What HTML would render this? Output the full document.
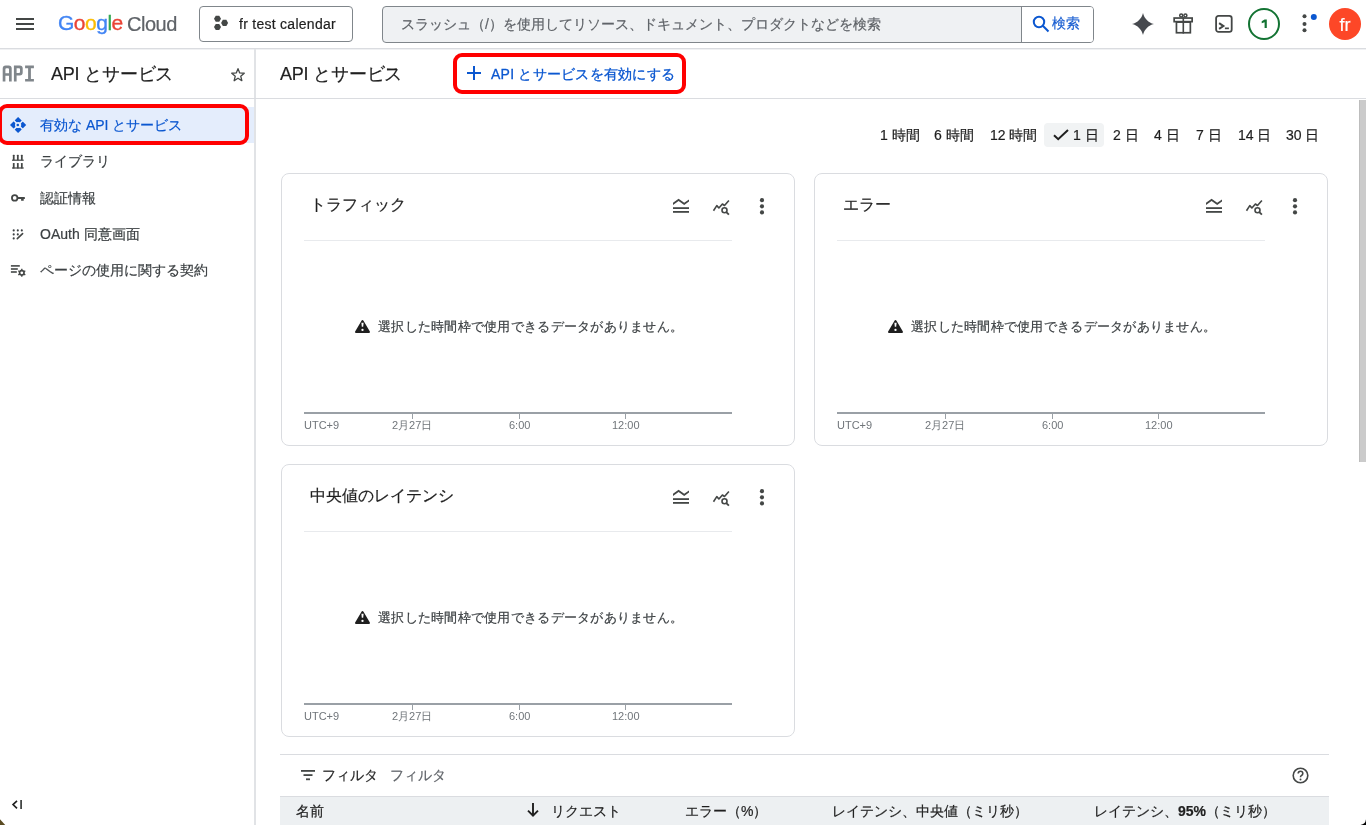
<!DOCTYPE html>
<html lang="ja">
<head>
<meta charset="utf-8">
<style>
*{box-sizing:border-box;margin:0;padding:0}
html,body{width:1366px;height:825px;overflow:hidden;background:#fff}
body{position:relative;font-family:"Liberation Sans",sans-serif;color:#3c4043}
.a{position:absolute;white-space:nowrap;-webkit-text-stroke:0.2px currentColor}
.hline{position:absolute;height:1px;background:#dadce0}
.vline{position:absolute;width:1px;background:#dadce0}
svg{position:absolute;overflow:visible}
</style>
</head>
<body>
<div id="root" style="position:absolute;left:0;top:0;width:1366px;height:825px;will-change:transform">
<!-- ===== HEADER ===== -->
<div class="hline" style="left:0;top:48px;width:1366px"></div><div class="hline" style="left:0;top:49px;width:1366px;background:#f0f1f3"></div>
<!-- hamburger -->
<div class="a" style="left:16px;top:18px;width:18px;height:2px;background:#444746"></div>
<div class="a" style="left:16px;top:23px;width:18px;height:2px;background:#444746"></div>
<div class="a" style="left:16px;top:28px;width:18px;height:2px;background:#444746"></div>
<!-- logo -->
<div class="a" id="logo" style="left:58px;top:11px;font-size:21px;line-height:24px;letter-spacing:-0.5px;-webkit-text-stroke:0.35px currentColor"><span style="color:#4285f4">G</span><span style="color:#ea4335">o</span><span style="color:#fbbc04">o</span><span style="color:#4285f4">g</span><span style="color:#34a853">l</span><span style="color:#ea4335">e</span></div>
<div class="a" id="logo2" style="left:127px;top:12px;font-size:20px;line-height:24px;letter-spacing:-0.5px;color:#5f6368;-webkit-text-stroke:0.2px #5f6368">Cloud</div>
<!-- project picker -->
<div class="a" style="left:199px;top:6px;width:154px;height:36px;border:1px solid #80868b;border-radius:4px"></div>
<svg style="left:200px;top:10px" width="30" height="26" viewBox="0 0 30 26"><polygon points="21.00,8.80 19.25,11.83 15.75,11.83 14.00,8.80 15.75,5.77 19.25,5.77" fill="#444746"/><polygon points="28.10,12.90 26.35,15.93 22.85,15.93 21.10,12.90 22.85,9.87 26.35,9.87" fill="#444746"/><polygon points="21.00,17.00 19.25,20.03 15.75,20.03 14.00,17.00 15.75,13.97 19.25,13.97" fill="#444746"/></svg>
<div class="a" id="proj" style="left:239px;top:15px;font-size:14px;line-height:18px;letter-spacing:0.27px;color:#1f1f1f">fr test calendar</div>
<!-- search -->
<div class="a" style="left:382px;top:6px;width:712px;height:37px;border:1px solid #80868b;border-radius:4px;background:#eff1f3;overflow:hidden">
  <div style="position:absolute;left:638px;top:0;width:74px;height:37px;background:#fff;border-left:1px solid #80868b"></div>
</div>
<div class="a" id="ph" style="left:401px;top:15px;font-size:14px;line-height:18px;color:#5f6368">スラッシュ（/）を使用してリソース、ドキュメント、プロダクトなどを検索</div>
<svg style="left:1032px;top:15px" width="18" height="18" viewBox="0 0 18 18"><circle cx="7" cy="7" r="5.2" fill="none" stroke="#0b57d0" stroke-width="2"/><line x1="10.8" y1="10.8" x2="16.5" y2="16.5" stroke="#0b57d0" stroke-width="2"/></svg>
<div class="a" id="srch" style="left:1052px;top:15px;font-size:13.5px;line-height:18px;color:#1a5fd2">検索</div>
<!-- right icons -->
<svg style="left:1132px;top:13px" width="22" height="22" viewBox="0 0 22 22"><path d="M11 0 C12.3 5.6 16.4 9.7 22 11 C16.4 12.3 12.3 16.4 11 22 C9.7 16.4 5.6 12.3 0 11 C5.6 9.7 9.7 5.6 11 0Z" fill="#46494e"/></svg>
<svg style="left:1168px;top:8px" width="30" height="30" viewBox="0 0 30 30"><g fill="none" stroke="#444746" stroke-width="1.7"><rect x="6.15" y="10.05" width="18" height="3.6"/><rect x="8.45" y="14.1" width="13.9" height="10.65"/><circle cx="13.2" cy="7.6" r="1.5" stroke-width="1.5"/><circle cx="17.4" cy="7.6" r="1.5" stroke-width="1.5"/></g><rect x="14.5" y="9.2" width="1.6" height="16.4" fill="#444746"/></svg>
<svg style="left:1215px;top:15px" width="18" height="18" viewBox="0 0 18 18"><rect x="1.1" y="0.95" width="15.6" height="15.95" rx="2.4" fill="none" stroke="#444746" stroke-width="1.8"/><path d="M4.1 8.2L8.4 11.05 4.1 13.9" fill="none" stroke="#444746" stroke-width="2"/><rect x="9.9" y="12.5" width="4" height="1.7" fill="#444746"/></svg>
<svg style="left:1248px;top:8px" width="32" height="32" viewBox="0 0 32 32"><circle cx="16" cy="16" r="15" fill="none" stroke="#137333" stroke-width="2"/></svg>
<svg style="left:1258px;top:17px" width="12" height="14" viewBox="0 0 12 14"><path d="M6.6 2.4H8.8V11.1H6.6V5.2L3.7 6.3V4.3z" fill="#137333"/></svg>
<svg style="left:1300px;top:14px" width="18" height="20" viewBox="0 0 18 20"><circle cx="4.5" cy="2.2" r="2" fill="#444746"/><circle cx="4.5" cy="10" r="2" fill="#444746"/><circle cx="4.5" cy="16.2" r="2" fill="#444746"/><circle cx="13.8" cy="2.9" r="3" fill="#0b57d0"/></svg>
<div class="a" style="left:1329px;top:8px;width:32px;height:32px;border-radius:50%;background:#fd4727"></div>
<div class="a" style="left:1329px;top:15px;width:32px;text-align:center;font-size:18px;line-height:20px;color:#fff">fr</div>

<!-- ===== SIDEBAR ===== -->
<div class="vline" style="left:254px;top:49px;height:776px;width:2px;background:#e1e3e6"></div>
<div class="hline" style="left:0;top:98px;width:1366px"></div>


<!-- sidebar header -->
<svg style="left:0;top:60px" width="40" height="28" viewBox="0 0 40 28"><g fill="#80868b">
<path d="M2.7 21.5V8.6Q2.7 5.6 5.7 5.6H8.7Q11.7 5.6 11.7 8.6V21.5H9V15.8H5.4V21.5Z M5.4 13.2H9V9.3Q9 8.3 8 8.3H6.4Q5.4 8.3 5.4 9.3Z"/>
<path d="M13.9 21.5V5.6H19.7Q22.7 5.6 22.7 8.6V12.6Q22.7 15.6 19.7 15.6H16.6V21.5Z M16.6 13H19Q20 13 20 12V9.3Q20 8.3 19 8.3H16.6Z"/>
<path d="M25.1 5.6H33.9V8.3H30.9V19H33.9V21.5H25.1V19H28.1V8.3H25.1Z"/>
</g></svg>
<div class="a" id="sbt" style="left:51px;top:62px;font-size:18px;line-height:24px;letter-spacing:-0.2px;color:#1f1f1f">API とサービス</div>
<svg style="left:230px;top:67px" width="16" height="15" viewBox="0 0 24 23"><path d="M12 2.5l2.6 6.6 7 .5-5.4 4.5 1.7 6.9L12 17.2 6.1 21l1.7-6.9L2.4 9.6l7-.5z" fill="none" stroke="#444746" stroke-width="2" stroke-linejoin="round"/></svg>
<!-- sidebar items -->
<div class="a" style="left:0;top:107px;width:254px;height:36px;background:#e4edfc"></div>
<svg style="left:6px;top:113px" width="24" height="24" viewBox="0 0 24 24"><defs><mask id="m1"><rect x="0" y="0" width="24" height="24" fill="#fff"/><path d="M5 5L19 19M19 5L5 19" stroke="#000" stroke-width="1.6"/><circle cx="11.8" cy="12" r="3.1" fill="#000"/></mask></defs><path d="M11.8 3.9L19.9 12 11.8 20.1 3.7 12z" fill="#0b57d0" mask="url(#m1)" transform="translate(0.3 0) "/><circle cx="11.8" cy="12" r="1.3" fill="#0b57d0"/></svg>
<div class="a" id="si1" style="left:40px;top:116px;font-size:14px;line-height:18px;color:#0b57d0">有効な API とサービス</div>
<svg style="left:0;top:150px" width="30" height="24" viewBox="0 0 30 24"><g fill="#444746"><rect x="12.85" y="4.7" width="1.75" height="5.5" rx="0.5"/><rect x="16.95" y="4.7" width="1.75" height="5.5" rx="0.5"/><rect x="20.95" y="4.7" width="1.75" height="5.5" rx="0.5"/><rect x="12" y="9.6" width="11.7" height="1.2"/><rect x="12.85" y="12.9" width="1.75" height="5.5" rx="0.5"/><rect x="16.95" y="12.9" width="1.75" height="5.5" rx="0.5"/><rect x="20.95" y="12.9" width="1.75" height="5.5" rx="0.5"/><rect x="12" y="17.4" width="11.7" height="1.2"/></g></svg>
<div class="a" id="si2" style="left:40px;top:152px;font-size:14px;line-height:18px">ライブラリ</div>
<svg style="left:6px;top:186px" width="24" height="24" viewBox="0 0 24 24"><circle cx="8.7" cy="11.9" r="2.75" fill="none" stroke="#444746" stroke-width="1.8"/><path d="M11.4 10.9H18.4Q18.9 10.9 18.9 11.4V12.4Q18.9 12.9 18.4 12.9H17.7V14.8H15.1V12.9H11.4z" fill="#444746"/></svg>
<div class="a" id="si3" style="left:40px;top:189px;font-size:14px;line-height:18px">認証情報</div>
<svg style="left:6px;top:222px" width="24" height="24" viewBox="0 0 24 24"><g fill="#3c4043"><circle cx="7.7" cy="8.4" r="1.05"/><circle cx="11.8" cy="8.4" r="1.05"/><circle cx="15.8" cy="8.4" r="1.05"/><circle cx="7.7" cy="12.4" r="1.05"/><circle cx="11.8" cy="12.4" r="1.05"/><circle cx="7.7" cy="16.4" r="1.05"/></g><path d="M11.3 16.7L16.6 11.6" stroke="#444746" stroke-width="1.6" stroke-linecap="round"/></svg>
<div class="a" id="si4" style="left:40px;top:225px;font-size:14px;line-height:18px">OAuth 同意画面</div>
<svg style="left:6px;top:258px" width="24" height="24" viewBox="0 0 24 24"><g fill="#444746"><rect x="4.9" y="7.1" width="8.9" height="1.6"/><rect x="4.9" y="10.2" width="6.9" height="1.6"/><rect x="4.9" y="13.2" width="5.9" height="1.6"/><path fill-rule="evenodd" d="M14.25,12.12 L15.10,11.78 L15.16,10.75 L16.44,10.75 L16.50,11.78 L17.35,12.12 L18.07,12.69 L18.99,12.22 L19.63,13.33 L18.76,13.89 L18.90,14.80 L18.76,15.71 L19.63,16.27 L18.99,17.38 L18.07,16.91 L17.35,17.48 L16.50,17.82 L16.44,18.85 L15.16,18.85 L15.10,17.82 L14.25,17.48 L13.53,16.91 L12.61,17.38 L11.97,16.27 L12.84,15.71 L12.70,14.80 L12.84,13.89 L11.97,13.33 L12.61,12.22 L13.53,12.69Z M17.20,14.8 A1.4,1.4 0 1,0 14.40,14.8 A1.4,1.4 0 1,0 17.20,14.8Z"/></g></svg>
<div class="a" id="si5" style="left:40px;top:261px;font-size:14px;line-height:18px">ページの使用に関する契約</div>
<!-- red box sidebar -->
<div class="a" style="left:-2px;top:104px;width:251px;height:41px;border:4px solid #ff0000;border-radius:9px"></div>
<!-- collapse -->
<svg style="left:11px;top:800px" width="12" height="10" viewBox="0 0 12 10"><path d="M6 0.8L2 4.6 6 8.4" fill="none" stroke="#1f1f1f" stroke-width="1.6"/><rect x="9.2" y="0" width="1.8" height="9" fill="#444746"/></svg>

<!-- ===== MAIN ===== -->
<div class="a" id="mt" style="left:280px;top:62px;font-size:18px;line-height:24px;letter-spacing:-0.2px;color:#1f1f1f">API とサービス</div>
<div class="a" style="left:453px;top:53px;width:233px;height:41px;border:4px solid #ff0000;border-radius:9px"></div>
<svg style="left:467px;top:66px" width="14" height="14" viewBox="0 0 14 14"><path d="M7 0V14M0 7H14" stroke="#0b57d0" stroke-width="2"/></svg>
<div class="a" id="en" style="left:491px;top:65px;font-size:14px;line-height:18px;letter-spacing:0.25px;color:#0b57d0;-webkit-text-stroke:0.3px #0b57d0">API とサービスを有効にする</div>


<!-- time range -->
<div class="a" style="left:1044px;top:123px;width:60px;height:24px;border-radius:4px;background:#f1f3f4"></div>
<div class="a" id="tr" style="left:880px;top:126px;font-size:14px;line-height:18px;color:#1f1f1f">
<span style="position:absolute;left:0">1 時間</span><span style="position:absolute;left:54px">6 時間</span><span style="position:absolute;left:110px">12 時間</span>
<span style="position:absolute;left:193px">1 日</span><span style="position:absolute;left:233px">2 日</span><span style="position:absolute;left:274px">4 日</span><span style="position:absolute;left:316px">7 日</span><span style="position:absolute;left:358px">14 日</span><span style="position:absolute;left:406px">30 日</span></div>
<svg style="left:1053px;top:129px" width="16" height="12" viewBox="0 0 16 12"><path d="M1 6.2L5.2 10.2 15 1" fill="none" stroke="#1f1f1f" stroke-width="2"/></svg>

<div class="a" style="left:281px;top:173px;width:514px;height:273px;border:1px solid #dadce0;border-radius:8px"></div>
<div class="a" id="c1t" style="left:310px;top:195px;font-size:16px;line-height:20px;color:#1f1f1f">トラフィック</div>
<svg style="left:673px;top:199px" width="17" height="14" viewBox="0 0 17 14"><path d="M0 3.8L5.6 -0.3 11.2 3.8 16 0.4V2.6L11.2 6 5.6 1.9 0 5.9z" fill="#444746"/><rect x="0" y="8.2" width="16" height="1.8" fill="#444746"/><rect x="0" y="12" width="16" height="1.8" fill="#444746"/></svg>
<svg style="left:713px;top:200px" width="17" height="15" viewBox="0 0 17 15"><path d="M0.5 10.7L3.8 5.6 5.9 8 9.4 4 11.5 5.5 15.9 0.4" fill="none" stroke="#444746" stroke-width="1.6" stroke-linejoin="round"/><circle cx="11.5" cy="10.3" r="2.5" fill="#fff" stroke="#444746" stroke-width="1.6"/><path d="M13.3 12.1L15.9 14.7" stroke="#444746" stroke-width="1.8"/></svg>
<svg style="left:759px;top:198px" width="6" height="18" viewBox="0 0 6 18"><circle cx="3" cy="2.2" r="2.1" fill="#444746"/><circle cx="3" cy="8.3" r="2.1" fill="#444746"/><circle cx="3" cy="14.4" r="2.1" fill="#444746"/></svg>
<div class="hline" style="left:304px;top:240px;width:428px;background:#e8eaed"></div>
<svg style="left:354px;top:318px" width="17" height="17" viewBox="0 0 17 17"><path d="M8.5 3L15 14H2z" fill="#1f1f1f" stroke="#1f1f1f" stroke-width="2" stroke-linejoin="round"/><path d="M7.4 4.8H9.6L9.2 8.8H7.8z" fill="#fff"/><circle cx="8.5" cy="11.9" r="1.15" fill="#fff"/></svg>
<div class="a" style="left:378px;top:318px;font-size:13px;line-height:17px;letter-spacing:0.27px;color:#3c4043">選択した時間枠で使用できるデータがありません。</div>
<div class="a" style="left:304px;top:412px;width:428px;height:1.5px;background:#9aa0a6"></div>
<div class="a" style="left:412px;top:413px;width:1px;height:6px;background:#9aa0a6"></div>
<div class="a" style="left:519px;top:413px;width:1px;height:6px;background:#9aa0a6"></div>
<div class="a" style="left:625px;top:413px;width:1px;height:6px;background:#9aa0a6"></div>
<div class="a" style="left:304px;top:419px;font-size:11px;line-height:13px;color:#70757a;-webkit-text-stroke:0">UTC+9</div>
<div class="a" style="left:392px;top:419px;font-size:11px;line-height:13px;color:#70757a;-webkit-text-stroke:0">2月27日</div>
<div class="a" style="left:509px;top:419px;font-size:11px;line-height:13px;color:#70757a;-webkit-text-stroke:0">6:00</div>
<div class="a" style="left:612px;top:419px;font-size:11px;line-height:13px;color:#70757a;-webkit-text-stroke:0">12:00</div>

<div class="a" style="left:814px;top:173px;width:514px;height:273px;border:1px solid #dadce0;border-radius:8px"></div>
<div class="a" id="c2t" style="left:843px;top:195px;font-size:16px;line-height:20px;color:#1f1f1f">エラー</div>
<svg style="left:1206px;top:199px" width="17" height="14" viewBox="0 0 17 14"><path d="M0 3.8L5.6 -0.3 11.2 3.8 16 0.4V2.6L11.2 6 5.6 1.9 0 5.9z" fill="#444746"/><rect x="0" y="8.2" width="16" height="1.8" fill="#444746"/><rect x="0" y="12" width="16" height="1.8" fill="#444746"/></svg>
<svg style="left:1246px;top:200px" width="17" height="15" viewBox="0 0 17 15"><path d="M0.5 10.7L3.8 5.6 5.9 8 9.4 4 11.5 5.5 15.9 0.4" fill="none" stroke="#444746" stroke-width="1.6" stroke-linejoin="round"/><circle cx="11.5" cy="10.3" r="2.5" fill="#fff" stroke="#444746" stroke-width="1.6"/><path d="M13.3 12.1L15.9 14.7" stroke="#444746" stroke-width="1.8"/></svg>
<svg style="left:1292px;top:198px" width="6" height="18" viewBox="0 0 6 18"><circle cx="3" cy="2.2" r="2.1" fill="#444746"/><circle cx="3" cy="8.3" r="2.1" fill="#444746"/><circle cx="3" cy="14.4" r="2.1" fill="#444746"/></svg>
<div class="hline" style="left:837px;top:240px;width:428px;background:#e8eaed"></div>
<svg style="left:887px;top:318px" width="17" height="17" viewBox="0 0 17 17"><path d="M8.5 3L15 14H2z" fill="#1f1f1f" stroke="#1f1f1f" stroke-width="2" stroke-linejoin="round"/><path d="M7.4 4.8H9.6L9.2 8.8H7.8z" fill="#fff"/><circle cx="8.5" cy="11.9" r="1.15" fill="#fff"/></svg>
<div class="a" style="left:911px;top:318px;font-size:13px;line-height:17px;letter-spacing:0.27px;color:#3c4043">選択した時間枠で使用できるデータがありません。</div>
<div class="a" style="left:837px;top:412px;width:428px;height:1.5px;background:#9aa0a6"></div>
<div class="a" style="left:945px;top:413px;width:1px;height:6px;background:#9aa0a6"></div>
<div class="a" style="left:1052px;top:413px;width:1px;height:6px;background:#9aa0a6"></div>
<div class="a" style="left:1158px;top:413px;width:1px;height:6px;background:#9aa0a6"></div>
<div class="a" style="left:837px;top:419px;font-size:11px;line-height:13px;color:#70757a;-webkit-text-stroke:0">UTC+9</div>
<div class="a" style="left:925px;top:419px;font-size:11px;line-height:13px;color:#70757a;-webkit-text-stroke:0">2月27日</div>
<div class="a" style="left:1042px;top:419px;font-size:11px;line-height:13px;color:#70757a;-webkit-text-stroke:0">6:00</div>
<div class="a" style="left:1145px;top:419px;font-size:11px;line-height:13px;color:#70757a;-webkit-text-stroke:0">12:00</div>

<div class="a" style="left:281px;top:464px;width:514px;height:273px;border:1px solid #dadce0;border-radius:8px"></div>
<div class="a" id="c3t" style="left:310px;top:486px;font-size:16px;line-height:20px;color:#1f1f1f">中央値のレイテンシ</div>
<svg style="left:673px;top:490px" width="17" height="14" viewBox="0 0 17 14"><path d="M0 3.8L5.6 -0.3 11.2 3.8 16 0.4V2.6L11.2 6 5.6 1.9 0 5.9z" fill="#444746"/><rect x="0" y="8.2" width="16" height="1.8" fill="#444746"/><rect x="0" y="12" width="16" height="1.8" fill="#444746"/></svg>
<svg style="left:713px;top:491px" width="17" height="15" viewBox="0 0 17 15"><path d="M0.5 10.7L3.8 5.6 5.9 8 9.4 4 11.5 5.5 15.9 0.4" fill="none" stroke="#444746" stroke-width="1.6" stroke-linejoin="round"/><circle cx="11.5" cy="10.3" r="2.5" fill="#fff" stroke="#444746" stroke-width="1.6"/><path d="M13.3 12.1L15.9 14.7" stroke="#444746" stroke-width="1.8"/></svg>
<svg style="left:759px;top:489px" width="6" height="18" viewBox="0 0 6 18"><circle cx="3" cy="2.2" r="2.1" fill="#444746"/><circle cx="3" cy="8.3" r="2.1" fill="#444746"/><circle cx="3" cy="14.4" r="2.1" fill="#444746"/></svg>
<div class="hline" style="left:304px;top:531px;width:428px;background:#e8eaed"></div>
<svg style="left:354px;top:609px" width="17" height="17" viewBox="0 0 17 17"><path d="M8.5 3L15 14H2z" fill="#1f1f1f" stroke="#1f1f1f" stroke-width="2" stroke-linejoin="round"/><path d="M7.4 4.8H9.6L9.2 8.8H7.8z" fill="#fff"/><circle cx="8.5" cy="11.9" r="1.15" fill="#fff"/></svg>
<div class="a" style="left:378px;top:609px;font-size:13px;line-height:17px;letter-spacing:0.27px;color:#3c4043">選択した時間枠で使用できるデータがありません。</div>
<div class="a" style="left:304px;top:703px;width:428px;height:1.5px;background:#9aa0a6"></div>
<div class="a" style="left:412px;top:704px;width:1px;height:6px;background:#9aa0a6"></div>
<div class="a" style="left:519px;top:704px;width:1px;height:6px;background:#9aa0a6"></div>
<div class="a" style="left:625px;top:704px;width:1px;height:6px;background:#9aa0a6"></div>
<div class="a" style="left:304px;top:710px;font-size:11px;line-height:13px;color:#70757a;-webkit-text-stroke:0">UTC+9</div>
<div class="a" style="left:392px;top:710px;font-size:11px;line-height:13px;color:#70757a;-webkit-text-stroke:0">2月27日</div>
<div class="a" style="left:509px;top:710px;font-size:11px;line-height:13px;color:#70757a;-webkit-text-stroke:0">6:00</div>
<div class="a" style="left:612px;top:710px;font-size:11px;line-height:13px;color:#70757a;-webkit-text-stroke:0">12:00</div>

<!-- table -->
<div class="hline" style="left:280px;top:754px;width:1049px"></div>
<svg style="left:301px;top:770px" width="14" height="11" viewBox="0 0 14 11"><rect x="0" y="0" width="14" height="1.8" fill="#444746"/><rect x="2.5" y="4.2" width="9" height="1.8" fill="#444746"/><rect x="5" y="8.4" width="4" height="1.8" fill="#444746"/></svg>
<div class="a" style="left:322px;top:766px;font-size:14px;line-height:18px;color:#1f1f1f">フィルタ</div>
<div class="a" style="left:390px;top:766px;font-size:14px;line-height:18px;color:#5f6368">フィルタ</div>
<svg style="left:1292px;top:767px" width="17" height="17" viewBox="0 0 17 17"><circle cx="8.5" cy="8.5" r="7.3" fill="none" stroke="#444746" stroke-width="1.6"/><path d="M6.2 6.6Q6.2 4.3 8.5 4.3Q10.8 4.3 10.8 6.4Q10.8 7.8 9.3 8.6Q8.5 9.1 8.5 10.2" fill="none" stroke="#444746" stroke-width="1.6"/><circle cx="8.5" cy="12.5" r="1" fill="#444746"/></svg>
<div class="a" style="left:280px;top:796px;width:1049px;height:29px;background:#edf0f2;border-top:1px solid #dadce0"></div>
<div class="a" style="left:296px;top:802px;font-size:14px;line-height:18px;color:#1f1f1f">名前</div>
<svg style="left:527px;top:803px" width="12" height="14" viewBox="0 0 12 14"><path d="M6 0V12.5M1 7.6L6 12.6 11 7.6" fill="none" stroke="#1f1f1f" stroke-width="1.9"/></svg>
<div class="a" style="left:551px;top:802px;font-size:14px;line-height:18px;color:#1f1f1f">リクエスト</div>
<div class="a" style="left:685px;top:802px;font-size:14px;line-height:18px;color:#1f1f1f">エラー（%）</div>
<div class="a" style="left:832px;top:802px;font-size:14px;line-height:18px;color:#1f1f1f">レイテンシ、中央値（ミリ秒）</div>
<div class="a" style="left:1094px;top:802px;font-size:14px;line-height:18px;color:#1f1f1f">レイテンシ、<b>95%</b>（ミリ秒）</div>
<!-- scrollbar -->
<div class="a" style="left:1359px;top:100px;width:7px;height:362px;background:#cbcbcb;border-left:1px solid #bdbdbd"></div>
<!-- window corners -->
<svg style="left:0;top:815px" width="10" height="10" viewBox="0 0 10 10"><path d="M0 4.3L5.2 10H0z" fill="#5a4b22"/></svg>
<svg style="left:1356px;top:815px" width="10" height="10" viewBox="0 0 10 10"><path d="M10 4.3Q9.4 9.4 4.5 10H10z" fill="#000"/></svg>

</div>
</body>
</html>
